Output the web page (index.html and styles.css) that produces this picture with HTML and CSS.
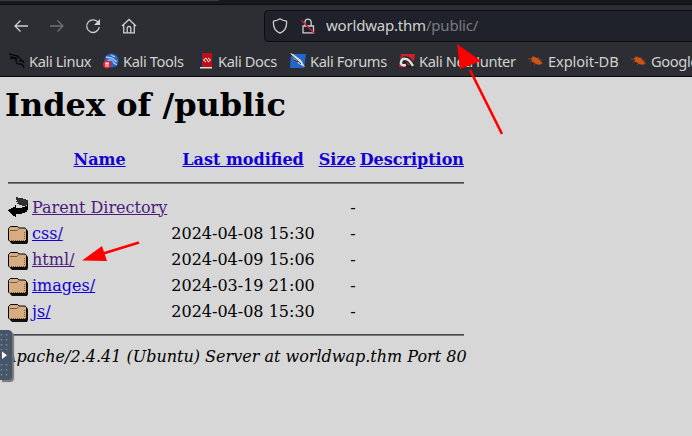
FILE: index.html
```
<!DOCTYPE html>
<html lang="en">
<head>
<meta charset="utf-8">
<title>Index of /public</title>
<link rel="stylesheet" href="styles.css">
</head>
<body>
<svg class="defs" width="0" height="0">
  <symbol id="folder" viewBox="0 0 20 22">
    <path d="M2 7h16l2 2v11l-1 2H4l-2-2z" fill="#111"/>
    <path d="M.5 6.500l2-2h7l1.500 1.500h6l1.500 1.500v10L17 19.500H2L.5 18z" fill="#d6ad82" stroke="#000"/>
    <path d="M2 8.500h7l1.500-1.500" fill="none" stroke="#8a5528"/>
    <path d="M3 18.500h14M16.500 10v8" fill="none" stroke="#8a5528" stroke-dasharray="1 1"/>
  </symbol>
  <symbol id="roach" viewBox="0 0 16 14">
    <path d="M3 4l3-1.500 4 2 4 4-1 2-4 0-5-3z" fill="#cf5515"/>
    <path d="M0 5h4M4 2l3 2M10 3l1 3M2 8l4-1M6 11l2-2M12 9l3 1M12 6l2 0" stroke="#a94a1a" stroke-width=".7" fill="none"/>
  </symbol>
</svg>
<header class="chrome">
  <div class="tabs"><span></span></div>
  <nav class="toolbar">
    <svg class="tool" viewBox="0 0 16 16"><path d="M15 8H2M7.500 2.500L2 8l5.500 5.500"/></svg>
    <svg class="tool dim" viewBox="0 0 16 16"><path d="M1 8h13M8.500 2.500L14 8l-5.500 5.500"/></svg>
    <svg class="tool" viewBox="0 0 16 16"><path d="M13.500 5A6.300 6.300 0 1 0 14.300 9"/><path class="solid" d="M15 1v6H9z"/></svg>
    <svg class="tool" viewBox="0 0 16 16"><path d="M1 8l7-6.500L15 8M2.700 7v7.800h10.600V7M6.200 14.500V10q0-1.500 1.800-1.500T9.800 10v4.500"/></svg>
    <div class="address">
      <svg class="shield" viewBox="0 0 16 16"><path d="M8 .8C6 2.300 4 2.800 1.500 3.200 1 8 3 13 8 15.200 13 13 15 8 14.500 3.200 12 2.800 10 2.300 8 .8z"/></svg>
      <svg class="lock" viewBox="0 0 16 16"><path d="M3 8h10.500v6.800H3zM5 8V4.500Q5 1.200 8 1.200T11.200 4.500V8"/><path class="slash" d="M1.500 2.500l13 13"/></svg>
      <span class="url">worldwap.thm<i>/public/</i></span>
    </div>
  </nav>
  <nav class="bookmarks">
    <a class="b1"><svg viewBox="0 0 16 16"><path d="M0 1l9 2 3 4 3 1M1 4l7 1M1 6q6-2 6 2 0 3 4 3 3 0 4 4M8 4l-1 4M10 8q4-1 5 2" fill="none" stroke="#08090b" stroke-width="1.300"/></svg>Kali Linux</a>
    <a class="b2"><svg viewBox="0 0 16 16"><circle cx="8.500" cy="7.500" r="7" fill="#2864c8"/><path d="M3 4l6 1 5 4M4 8q5-3 7 2l3 2M8 2l4 2" fill="none" stroke="#b8cff0" stroke-width="1.300"/><circle cx="4" cy="11.500" r="4" fill="#df2027"/><path d="M2 10h4M3 10v4M5 10v4" stroke="#fff"/></svg>Kali Tools</a>
    <a class="b3"><svg viewBox="0 0 16 16"><path d="M2 0h12v15H2z" fill="#bd1115"/><path d="M2 0h2v15H2z" fill="#182d5c"/><path d="M2 14h12v1.500H2z" fill="#ddd"/><path d="M8 5L5.500 7 8 9M10 5l2.500 2L10 9M8 5l2.500 4" fill="none" stroke="#fff"/></svg>Kali Docs</a>
    <a class="b4"><svg viewBox="0 0 16 16"><path d="M1 1h15l-2 14H0z" fill="#2467cc"/><path d="M0 0l3 1 8 6 4 7-6-3-5-5z" fill="#d9dce2"/><path d="M0 1l11 10M4 7l4 2" stroke="#262930" fill="none"/></svg>Kali Forums</a>
    <a class="b5"><svg viewBox="0 0 16 16"><path d="M2 1h14l-2 13H0z" fill="#c9222b"/><path d="M0 7l5-4 5 1 5 5v6H8z" fill="#222429"/><path d="M7 12Q1 13 2 9q1-4 5-3 3 0 7 7" fill="none" stroke="#e2e2e2" stroke-width="2.400"/><path d="M7 8.500l4 3-2 1z" fill="#c9222b"/></svg>Kali NetHunter</a>
    <a class="b6"><svg viewBox="0 0 16 14"><use href="#roach"/></svg>Exploit-DB</a>
    <a class="b7"><svg viewBox="0 0 16 14"><use href="#roach"/></svg>Google Hacking DB</a>
  </nav>
</header>
<main>
  <h1>Index of /public</h1>
  <table>
    <tr><th class="icon"></th><th><a>Name</a></th><th><a>Last modified</a></th><th><a>Size</a></th><th><a>Description</a></th></tr>
    <tr><th colspan="5"><hr></th></tr>
    <tr><td class="icon"><svg viewBox="0 0 20 22" shape-rendering="crispEdges"><path d="M8 1h2v1h5v1h3v1h2v5h-2v1h-4V9h-3V8H9V7h1V6H8V5h1V4H8z" fill="#303030"/><path d="M0 14h1v-1h2v-1h2v-1h2V9h1v3h6v-1h3v-1h2V7h1v7h-1v2h-2v1h-3v1H8v3H7v-1H5v-1H4v-1H3v-1H2v-1H1v-1H0z"/></svg></td><td><a class="visited">Parent Directory</a></td><td></td><td class="num">-</td><td></td></tr>
    <tr><td class="icon"><svg><use href="#folder"/></svg></td><td><a>css/</a></td><td class="num">2024-04-08 15:30</td><td class="num">-</td><td></td></tr>
    <tr><td class="icon"><svg><use href="#folder"/></svg></td><td><a class="visited">html/</a></td><td class="num">2024-04-09 15:06</td><td class="num">-</td><td></td></tr>
    <tr><td class="icon"><svg><use href="#folder"/></svg></td><td><a>images/</a></td><td class="num">2024-03-19 21:00</td><td class="num">-</td><td></td></tr>
    <tr><td class="icon"><svg><use href="#folder"/></svg></td><td><a>js/</a></td><td class="num">2024-04-08 15:30</td><td class="num">-</td><td></td></tr>
    <tr><th colspan="5"><hr></th></tr>
  </table>
  <address>Apache/2.4.41 (Ubuntu) Server at worldwap.thm Port 80</address>
</main>
<div class="handle"><svg viewBox="0 0 12 50"><path d="M1.500 4v42M6.500 4v42" stroke="#7e8b9e" stroke-width="1.500" stroke-dasharray="1.500 3.500"/><path d="M0 20h9v11H0z" fill="#475569"/><path d="M2 21.500l5 3.700-5 3.800z" fill="#fff"/></svg></div>
<svg class="arrows" viewBox="0 0 692 436"><path d="M502 134L470 70M139 242.500L100 254.500" stroke="#f00" stroke-width="2.600"/><path d="M457 44l24 17-21 8zM82 260.500l20-14.500 5 15z" fill="#f00"/></svg>
</body>
</html>
```

FILE: styles.css
```
body {
  margin: 0;
  width: 692px;
  height: 436px;
  overflow: hidden;
  background: #d7d7d7;
  color: #000;
  font: 16px/19px "DejaVu Serif", serif;
}
.defs { position: absolute; }
.chrome {
  box-sizing: border-box;
  height: 77px;
  overflow: hidden;
  background: #2d2e33;
  border-bottom: 1px solid #08080a;
  color: #d2d2d0;
  font-family: "Noto Sans", sans-serif;
}
.tabs {
  box-sizing: border-box;
  height: 5px;
  background: #17181c;
  border-bottom: 1px solid #0c0c0e;
}
.tabs span {
  display: block;
  width: 219px;
  height: 1px;
  background: #38393e;
}
.toolbar {
  display: flex;
  align-items: center;
  height: 41px;
  padding-left: 13px;
}
.toolbar svg {
  flex: none;
  width: 16px;
  height: 16px;
  fill: none;
  stroke: #cfcfcb;
  stroke-width: 1.3;
}
.toolbar .tool { margin-right: 20px; }
.toolbar .dim { stroke: #707176; }
.toolbar .solid { fill: #cfcfcb; stroke: none; }
.address {
  box-sizing: border-box;
  display: flex;
  align-items: center;
  flex: none;
  width: 440px;
  height: 32px;
  margin-left: 107px;
  padding-left: 7px;
  background: #20222b;
  border: 1px solid #0c0d11;
  border-radius: 4px;
}
.address .lock { margin-left: 12px; }
.address .slash { stroke: #d51b45; }
.url {
  margin: 0 0 2px 10px;
  font-size: 15px;
  line-height: 20px;
  letter-spacing: -0.2px;
}
.url i { color: #797a7f; font-style: normal; }
.bookmarks {
  display: flex;
  height: 30px;
  padding-left: 9px;
  font-size: 14.67px;
  line-height: 20px;
  letter-spacing: -0.38px;
  white-space: nowrap;
}
.bookmarks a {
  display: flex;
  flex: none;
  align-items: center;
  gap: 4px;
  height: 30px;
  color: #d2d2d0;
  text-decoration: none;
}
.bookmarks svg { flex: none; width: 16px; height: 16px; }
.b1 { width: 94px; }
.b2 { width: 95px; }
.b3 { width: 92px; }
.b4 { width: 109px; }
.b5 { width: 129px; }
.b6 { width: 103px; }
.bookmarks .b6 { letter-spacing: -0.1px; }
main { padding-left: 5px; }
h1 {
  margin: 0;
  padding-top: 9px;
  height: 59px;
  font-size: 32px;
  line-height: 38px;
}
table {
  border-collapse: separate;
  border-spacing: 2px;
}
th, td { padding: 1px; height: 22px; white-space: nowrap; }
th[colspan] { height: 18px; }
td { vertical-align: middle; }
main a { color: #1200d6; text-decoration: underline; }
main a.visited { color: #4c1a7e; }
.icon svg { display: block; width: 20px; height: 22px; }
.icon { width: 20px; }
.num { text-align: right; }
td.num:nth-child(3) { padding-right: 1px; }
hr {
  height: 1px;
  margin: 8px 0;
  border: 0;
  border-top: 1px solid #49494b;
  background: #777779;
}
address { font-style: italic; }
.handle {
  position: absolute;
  left: 0;
  top: 330px;
  width: 12px;
  height: 50px;
  background: #475569;
  border-radius: 0 4px 4px 0;
  box-shadow: 2px 2px 1px #777;
}
.handle svg { display: block; width: 12px; height: 50px; }
.arrows { position: absolute; left: 0; top: 0; width: 692px; height: 436px; fill: none; }
```
